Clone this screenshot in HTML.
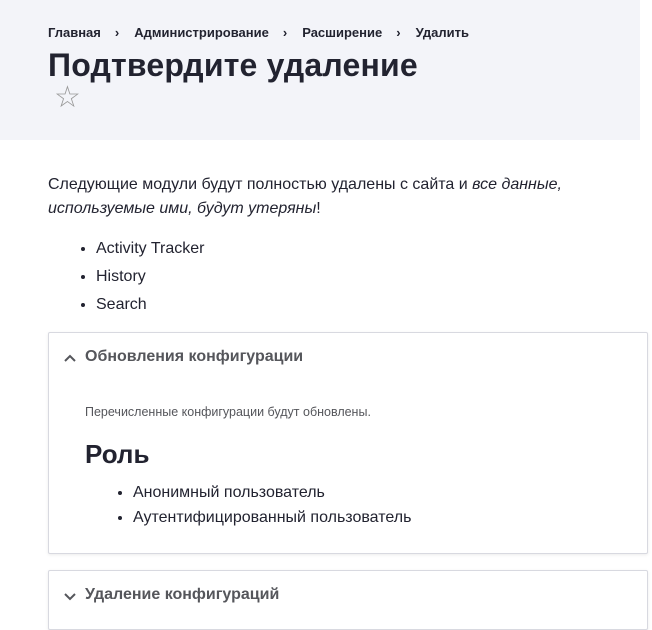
<!DOCTYPE html>
<html><head><meta charset="utf-8"><style>
*{box-sizing:border-box}
body{margin:0;width:652px;height:592px;overflow:hidden;background:#fff;font-family:"Liberation Sans",sans-serif;color:#222330;position:relative}
.hdr{position:absolute;left:0;top:0;width:640px;height:140px;background:#f3f4f9}
.bc{position:absolute;top:25px;left:48px;font-size:13px;font-weight:bold;color:#222330;white-space:nowrap}
.bc span{display:inline-block}
.sep{margin:0 15px 0 14px;font-weight:bold}
h1{position:absolute;left:48px;top:46px;margin:0;font-size:32px;font-weight:bold;line-height:38px;letter-spacing:0.2px}
.star{position:absolute;left:54px;top:81px;font-size:30px;color:#999;line-height:34px}
p.m{position:absolute;left:48px;top:173px;margin:0;font-size:16px;line-height:24px;width:540px}
ul.mods{position:absolute;left:48px;top:235px;margin:0;padding-left:48px;font-size:16px;line-height:28px}
.panel{position:absolute;left:48px;width:600px;border:1px solid #d8d9e0;border-radius:2px;box-shadow:0 1px 3px rgba(0,0,0,.08);background:#fff}
.ph{position:absolute;left:36px;top:15px;font-size:16px;font-weight:bold;color:#55565b}
.chev{position:absolute;left:14px;top:20px}
.small{position:absolute;left:36px;top:72px;font-size:12.5px;color:#55565b}
h2{position:absolute;left:36px;top:104px;margin:0;font-size:26px;font-weight:bold;line-height:34px}
ul.r{position:absolute;left:36px;top:147px;margin:0;padding-left:48px;font-size:16px;line-height:25px}
</style></head><body>
<div class="hdr">
<div class="bc"><span>Главная</span><span class="sep">›</span><span>Администрирование</span><span class="sep">›</span><span>Расширение</span><span class="sep">›</span><span>Удалить</span></div>
<h1>Подтвердите удаление</h1>
<div class="star">☆</div>
</div>
<p class="m">Следующие модули будут полностью удалены с сайта и <i>все данные, используемые ими, будут утеряны</i>!</p>
<ul class="mods"><li>Activity Tracker</li><li>History</li><li>Search</li></ul>
<div class="panel" style="top:332px;height:222px">
<svg class="chev" width="14" height="10" viewBox="0 0 14 10"><path d="M2 8 L7 3 L12 8" stroke="#55565b" stroke-width="2" fill="none"/></svg>
<div class="ph">Обновления конфигурации</div>
<div class="small">Перечисленные конфигурации будут обновлены.</div>
<h2>Роль</h2>
<ul class="r"><li>Анонимный пользователь</li><li>Аутентифицированный пользователь</li></ul>
</div>
<div class="panel" style="top:570px;height:60px">
<svg class="chev" width="14" height="10" viewBox="0 0 14 10"><path d="M2 3 L7 8 L12 3" stroke="#55565b" stroke-width="2" fill="none"/></svg>
<div class="ph">Удаление конфигураций</div>
</div>
</body></html>
